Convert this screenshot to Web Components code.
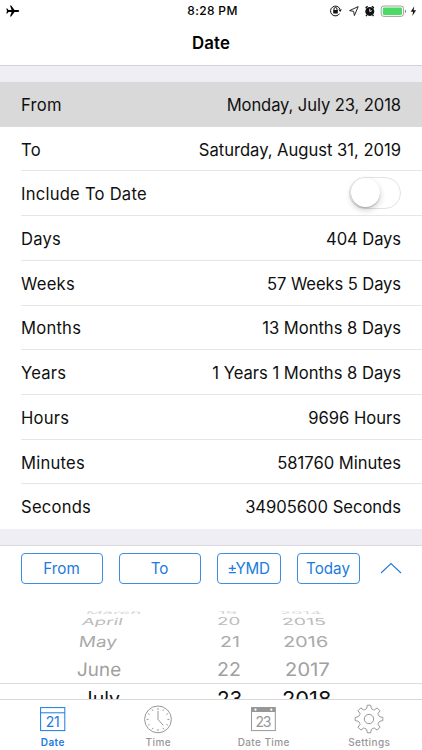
<!DOCTYPE html>
<html lang="en">
<head>
<meta charset="utf-8">
<meta name="viewport" content="width=device-width, initial-scale=1">
<title>Date</title>
<style>
  body {
    margin: 0;
    background: #fff;
    color: #101010;
    font-family: Inter, "Liberation Sans", sans-serif;
  }
</style>
</head>
<body>
<date-app></date-app>

<script>
/** Attaches an open shadow root filled with the given markup. */
function mount(host, html) {
  host.attachShadow({ mode: "open" }).innerHTML = html;
}

/** Status bar with time, connection and battery icons. */
class StatusBar extends HTMLElement {
  connectedCallback() {
    mount(this, `
      <style>
        :host {
          display: grid;
          grid-template-columns: 1fr auto 1fr;
          height: 21px;
          align-items: center;
          color: #000;
          font-size: 12px;
          font-weight: 500;
          letter-spacing: 0.35px;
        }
        svg { display: block; }
        .left { padding-left: 6px; }
        .time { padding-left: 3px; }
        .right {
          display: flex;
          justify-content: flex-end;
          align-items: center;
          padding-right: 5px;
        }
      </style>
      <div class="left">
        <svg width="14" height="12" viewBox="0 0 14 12">
          <path d="M13.2 6c0-.6-.7-.9-1.5-.9H8.5L5.2.4H4l1.6 4.7H2.5L1.3 3.6H.3L1 6 .3 8.4h1l1.2-1.5h3.1L4 11.6h1.2l3.3-4.7h3.2c.8 0 1.5-.3 1.5-.9z"/>
        </svg>
      </div>
      <div class="time">8:28 PM</div>
      <div class="right">
        <svg width="88" height="14" viewBox="0 0 88 14">
          <g fill="none" stroke="#111">
            <path d="M10.6 9.6A4.9 4.9 0 1 1 11 5.2" />
            <path d="M5 6.5V5a1.5 1.5 0 0 1 3 0v1.5" />
            <path d="M29.2 2.6L20.6 6.6l4 .8.8 4.1z" stroke-width=".9" stroke-linejoin="round"/>
            <path d="M36.6 4.1l2-1.8M44.9 4.1l-2-1.8M37.9 11l-.9 1.2M43.6 11l.9 1.2" stroke-width="1.4"/>
          </g>
          <rect x="4.2" y="6.1" width="4.6" height="3.5" rx=".5" fill="#111"/>
          <path d="M9.4 5.6h3.5L11.1 8z" fill="#111"/>
          <circle cx="40.8" cy="7.4" r="4.5" fill="#111"/>
          <path d="M40.8 4.8v2.8l2.1-1" fill="none" stroke="#fff" stroke-width=".9"/>
          <rect x="52.2" y="2" width="22.4" height="10.4" rx="2.7" fill="#fff" stroke="#888" stroke-width=".8"/>
          <rect x="53.8" y="3.5" width="19.2" height="7.4" rx="1.3" fill="#4cd964"/>
          <path d="M76 5.4c1.5.4 1.5 3.2 0 3.6z" fill="#888"/>
          <path d="M83.8 2.2L80.4 7.7h2.3l-.8 4.3 3.8-5.8h-2.5z" transform="translate(1.4 0)" fill="#111"/>
        </svg>
      </div>
    `);
  }
}
customElements.define("status-bar", StatusBar);

class NavTitle extends HTMLElement {
  connectedCallback() {
    mount(this, `
      <style>
        :host {
          display: flex;
          box-sizing: border-box;
          height: 45px;
          justify-content: center;
          padding-top: 11px;
          border-bottom: 1px solid #d2d1d6;
          color: #000;
          font-size: 16.8px;
          font-weight: 600;
          line-height: 23px;
          letter-spacing: 0.2px;
        }
      </style>
      <slot></slot>
    `);
  }
}
customElements.define("nav-title", NavTitle);

/** One line of the result list: label on the left, value on the right. */
class ResultRow extends HTMLElement {
  connectedCallback() {
    mount(this, `
      <style>
        :host {
          display: flex;
          box-sizing: border-box;
          height: 44.72px;
          padding-left: 21px;
          font-size: 16.6px;
        }
        :host([selected]) { background: #d9d9d9; }
        .line {
          display: flex;
          flex: 1;
          align-items: center;
          justify-content: space-between;
          padding-right: 21px;
          border-bottom: 1px solid #e6e6e8;
        }
        :host([selected]) .line, :host([last]) .line { border-color: transparent; }
        .label { padding-top: 2px; letter-spacing: 0.23px; }
        .value { padding-top: 2px; letter-spacing: var(--value-spacing, -0.1px); }
        ::slotted(toggle-switch) { margin-top: -2px; }
      </style>
      <div class="line">
        <span class="label">${this.getAttribute("label")}</span>
        <span class="value"><slot></slot></span>
      </div>
    `);
  }
}
customElements.define("result-row", ResultRow);

class ToggleSwitch extends HTMLElement {
  connectedCallback() {
    mount(this, `
      <style>
        :host {
          display: block;
          box-sizing: border-box;
          width: 52px;
          height: 32px;
          border: 1.5px solid #e3e3e3;
          border-radius: 16px;
          background: #fff;
        }
        .knob {
          width: 29px;
          height: 29px;
          margin-left: 0.5px;
          border-radius: 50%;
          background: #fff;
          box-shadow: 0 3px 6px rgba(0,0,0,.2), 0 1px 1px rgba(0,0,0,.2);
        }
      </style>
      <div class="knob"></div>
    `);
  }
}
customElements.define("toggle-switch", ToggleSwitch);

class OutlineButton extends HTMLElement {
  connectedCallback() {
    mount(this, `
      <style>
        :host {
          display: flex;
          box-sizing: border-box;
          height: 31px;
          align-items: center;
          justify-content: center;
          border: 1.3px solid #3b8ee2;
          border-radius: 4px;
          color: #207bdc;
          font-size: 15.2px;
        }
      </style>
      <slot></slot>
    `);
  }
}
customElements.define("outline-button", OutlineButton);

class PickerToolbar extends HTMLElement {
  connectedCallback() {
    mount(this, `
      <style>
        :host {
          display: grid;
          grid-template-columns: 82px 82px 64px 63px 22px;
          column-gap: 16px;
          padding: 7px 20px 0 20.5px;
          align-items: center;
        }
        svg { display: block; margin-left: 4px; }
      </style>
      <outline-button>From</outline-button>
      <outline-button>To</outline-button>
      <outline-button style="letter-spacing:-.3px">±YMD</outline-button>
      <outline-button>Today</outline-button>
      <svg width="22" height="14" viewBox="0 0 22 14">
        <path d="M1 11L11 1.6 21 11" fill="none" stroke="#207bdc" stroke-width="1.1"/>
      </svg>
    `);
  }
}
customElements.define("picker-toolbar", PickerToolbar);

/**
 * Date wheel. Rows are squeezed and slanted the further they are
 * from the selected one. Cell: [text, left, width scale, slant].
 */
const WHEEL = [
  { height: 3, scale: 0.2, color: "#d6d6d6", cells: [["March", 86, 0.95, -30], ["19", 218, 0.95, 0], ["2014", 280, 0.93, 15]] },
  { height: 15, scale: 0.5, color: "#bcbcbc", cells: [["April", 82, 0.96, -14], ["20", 216.5, 0.96, 0], ["2015", 281.5, 1, 8]] },
  { height: 26, scale: 0.77, color: "#aaa", cells: [["May", 78.5, 0.97, -7], ["21", 220, 1, 0], ["2016", 283, 1.02, 4]] },
  { height: 28, scale: 0.96, color: "#a0a0a0", cells: [["June", 76.5, 0.97, -2], ["22", 217, 1, 0], ["2017", 285, 1.04, 1]] },
  { height: 30, scale: 1.04, color: "#111", selected: true, cells: [["July", 81.5, 1, 0], ["23", 217, 1.06, 0], ["2018", 282, 1.12, 0]] }
];

class DateWheel extends HTMLElement {
  connectedCallback() {
    const columns = [0, 180, 270];
    const rows = WHEEL.map(row => {
      const cells = row.cells.map(([text, left, sx, slant], i) =>
        `<span style="margin-left:${left - columns[i]}px;transform:skewX(${slant}deg) scale(${sx},${row.scale})">${text}</span>`
      ).join("");
      return `<div class="row ${row.selected ? "selected" : ""}" style="height:${row.height}px;line-height:${row.height}px;color:${row.color}">${cells}</div>`;
    }).join("");

    mount(this, `
      <style>
        :host {
          display: block;
          flex: 1;
          min-height: 0;
          margin-top: 27px;
          overflow: hidden;
          font-size: 19.5px;
        }
        .row {
          display: grid;
          grid-template-columns: 180px 90px 152px;
        }
        .selected {
          box-sizing: border-box;
          border-top: 1px solid #dcdcdc;
        }
        span {
          justify-self: start;
          transform-origin: left center;
          white-space: nowrap;
        }
      </style>
      ${rows}
    `);
  }
}
customElements.define("date-wheel", DateWheel);

const TAB_ICONS = {
  date: `
    <rect x="2.6" y="3.6" width="24.2" height="23" />
    <path d="M2.6 8.8h24.2"/>
    <text x="14.7" y="22.8" text-anchor="middle" textLength="14">21</text>`,
  time: `
    <circle cx="15" cy="15.4" r="13.4"/>
    <path d="M15 7v8.4l5.3 6"/>
    <path d="M15 4v2M15 25v2M3.6 15.4h2M24.4 15.4h2M9.3 5.5l.8 1.4M20.7 5.5l-.8 1.4M5.1 9.7l1.4.8M24.9 9.7l-1.4.8M5.1 21.1l1.4-.8M24.9 21.1l-1.4-.8M9.3 25.3l.8-1.4M20.7 25.3l-.8-1.4"/>`,
  datetime: `
    <rect x="2.5" y="3.6" width="23.8" height="23"/>
    <path d="M2.5 3h23.8v5H2.5z" fill="currentColor" stroke="none"/>
    <circle cx="6.5" cy="5.7" r="1.1" fill="#fff" stroke="none"/>
    <circle cx="22.3" cy="5.7" r="1.1" fill="#fff" stroke="none"/>
    <text x="14.4" y="22.5" text-anchor="middle" textLength="16">23</text>`,
  settings: `
    <circle cx="15" cy="15" r="4.7"/>
    <path d="M13.4 1.2h3.2q.5 3.4 1.5 4 1.6.9 2.4.7l2.6-2 2.9 2.9-2 2.7q.1 1.3.8 2.3.7 1.2 4 1.6v3.2q-3.3.4-4 1.6-.7 1-.8 2.3l2 2.7-2.9 2.9-2.6-2q-1.2.1-2.4.7-1 .6-1.5 4h-3.2q-.5-3.4-1.5-4-1.2-.6-2.4-.7l-2.6 2L4 23.2l2-2.7q-.1-1.3-.8-2.3-.7-1.2-4-1.6v-3.2q3.3-.4 4-1.6.7-1 .8-2.3L4 6.8l2.9-2.9 2.6 2q1.2-.1 2.4-.7 1-.6 1.5-4z" stroke-linejoin="round"/>`
};

class TabItem extends HTMLElement {
  connectedCallback() {
    mount(this, `
      <style>
        :host {
          display: flex;
          flex-direction: column;
          align-items: center;
          padding-top: 4px;
          color: #979797;
          font-size: 10px;
          font-weight: 500;
          letter-spacing: 0.4px;
          line-height: 13px;
        }
        :host([active]) { color: #1b7be0; font-weight: 600; }
        svg {
          display: block;
          margin-bottom: 2px;
          fill: none;
          stroke: currentColor;
          stroke-width: 1;
        }
        text {
          fill: currentColor;
          stroke: none;
          font-size: 14px;
          font-weight: 400;
          letter-spacing: 0;
        }
      </style>
      <svg width="30" height="30" viewBox="0 0 30 30">${TAB_ICONS[this.getAttribute("icon")]}</svg>
      <slot></slot>
    `);
  }
}
customElements.define("tab-item", TabItem);

class TabBar extends HTMLElement {
  connectedCallback() {
    mount(this, `
      <style>
        :host {
          display: grid;
          grid-template-columns: repeat(4, 1fr);
          box-sizing: border-box;
          height: 51px;
          border-top: 1px solid #d8d8d8;
          background: #fff;
        }
      </style>
      <tab-item icon="date" active>Date</tab-item>
      <tab-item icon="time">Time</tab-item>
      <tab-item icon="datetime">Date Time</tab-item>
      <tab-item icon="settings">Settings</tab-item>
    `);
  }
}
customElements.define("tab-bar", TabBar);

class DateApp extends HTMLElement {
  connectedCallback() {
    mount(this, `
      <style>
        :host {
          display: flex;
          flex-direction: column;
          width: 422px;
          height: 750px;
          overflow: hidden;
        }
        .gap {
          box-sizing: border-box;
          flex: none;
          height: 16px;
          background: #efeef4;
        }
        .gap.bottom { height: 17px; border-bottom: 1px solid #d9d8de; }
        .list { height: 447px; flex: none; }
        .wide { --value-spacing: -0.02px; }
      </style>
      <status-bar></status-bar>
      <nav-title>Date</nav-title>
      <div class="gap"></div>
      <div class="list">
        <result-row label="From" selected>Monday, July 23, 2018</result-row>
        <result-row label="To" class="wide">Saturday, August 31, 2019</result-row>
        <result-row label="Include To Date"><toggle-switch></toggle-switch></result-row>
        <result-row label="Days">404 Days</result-row>
        <result-row label="Weeks">57 Weeks 5 Days</result-row>
        <result-row label="Months" class="wide">13 Months 8 Days</result-row>
        <result-row label="Years" class="wide">1 Years 1 Months 8 Days</result-row>
        <result-row label="Hours" class="wide">9696 Hours</result-row>
        <result-row label="Minutes" class="wide">581760 Minutes</result-row>
        <result-row label="Seconds" class="wide" last>34905600 Seconds</result-row>
      </div>
      <div class="gap bottom"></div>
      <picker-toolbar></picker-toolbar>
      <date-wheel></date-wheel>
      <tab-bar></tab-bar>
    `);
  }
}
customElements.define("date-app", DateApp);
</script>
</body>
</html>
